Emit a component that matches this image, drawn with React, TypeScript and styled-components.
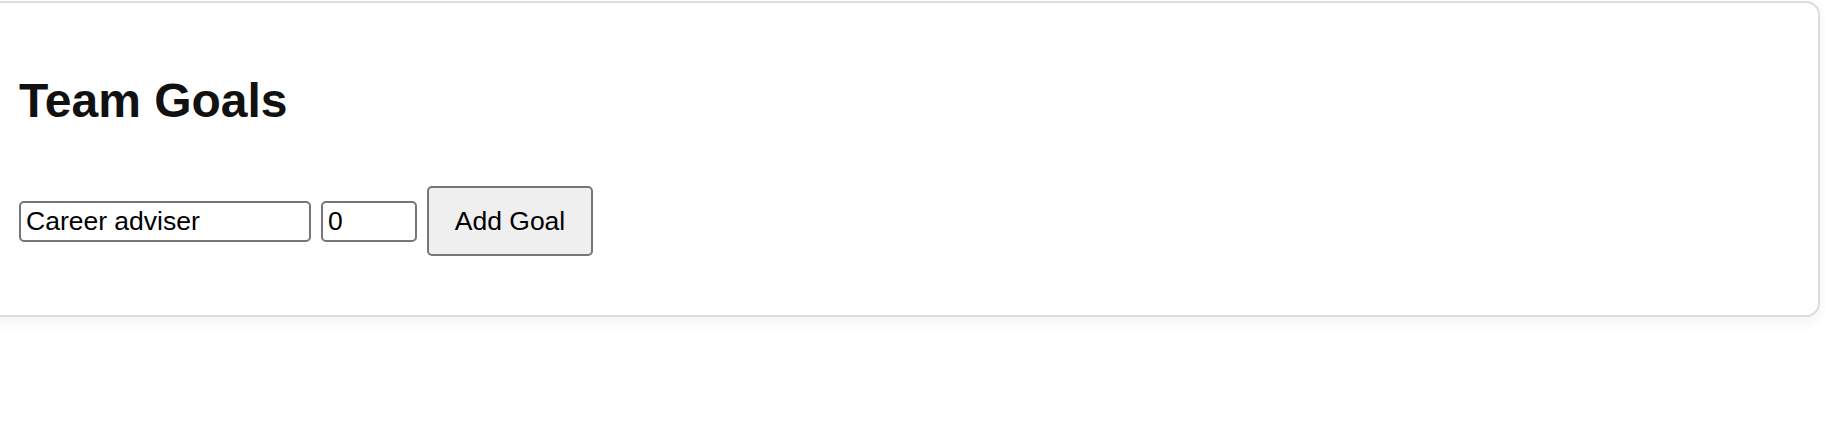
import React, { useState } from "react";
import styled, { createGlobalStyle } from "styled-components";

const GlobalStyle = createGlobalStyle`
  html, body {
    margin: 0;
    padding: 0;
    background: #ffffff;
    overflow: hidden;
  }
  body {
    font-family: "Liberation Sans", Arial, sans-serif;
    color: #111111;
  }
`;

const Page = styled.div`
  width: 1826px;
  height: 436px;
  padding-top: 1px;
  box-sizing: border-box;
`;

const Card = styled.section`
  margin: 0 6px 0 -30px;
  padding: 0 47px;
  height: 316px;
  box-sizing: border-box;
  border: 2px solid #dcdcdc;
  border-radius: 14px;
  background: #ffffff;
  box-shadow: 0 5px 14px rgba(0, 0, 0, 0.05);
`;

const Title = styled.h1`
  margin: 70px 0 58px;
  font-size: 48px;
  line-height: 1.15;
  font-weight: 700;
  color: #111111;
`;

const GoalForm = styled.form`
  display: flex;
  align-items: center;
  gap: 10px;
`;

const Field = styled.input<{ $width: number }>`
  width: ${(p) => p.$width}px;
  height: 41px;
  box-sizing: border-box;
  padding: 0 6px 0 5px;
  border: 2px solid #767676;
  border-radius: 5px;
  background: #ffffff;
  font-family: "Liberation Sans", Arial, sans-serif;
  font-size: 26.5px;
  color: #000000;
  outline: none;

  &::-webkit-inner-spin-button,
  &::-webkit-outer-spin-button {
    -webkit-appearance: none;
    margin: 0;
  }
  -moz-appearance: textfield;
`;

const AddButton = styled.button`
  width: 166px;
  height: 70px;
  box-sizing: border-box;
  border: 2px solid #767676;
  border-radius: 5px;
  background: #efefef;
  font-family: "Liberation Sans", Arial, sans-serif;
  font-size: 26.5px;
  color: #000000;
  cursor: pointer;
`;

export default function App() {
  const [name, setName] = useState("Career adviser");
  const [target, setTarget] = useState("0");

  return (
    <Page>
      <GlobalStyle />
      <Card>
        <Title>Team Goals</Title>
        <GoalForm onSubmit={(e) => e.preventDefault()}>
          <Field
            $width={292}
            type="text"
            value={name}
            onChange={(e) => setName(e.target.value)}
          />
          <Field
            $width={96}
            type="number"
            value={target}
            onChange={(e) => setTarget(e.target.value)}
          />
          <AddButton type="submit">Add Goal</AddButton>
        </GoalForm>
      </Card>
    </Page>
  );
}
